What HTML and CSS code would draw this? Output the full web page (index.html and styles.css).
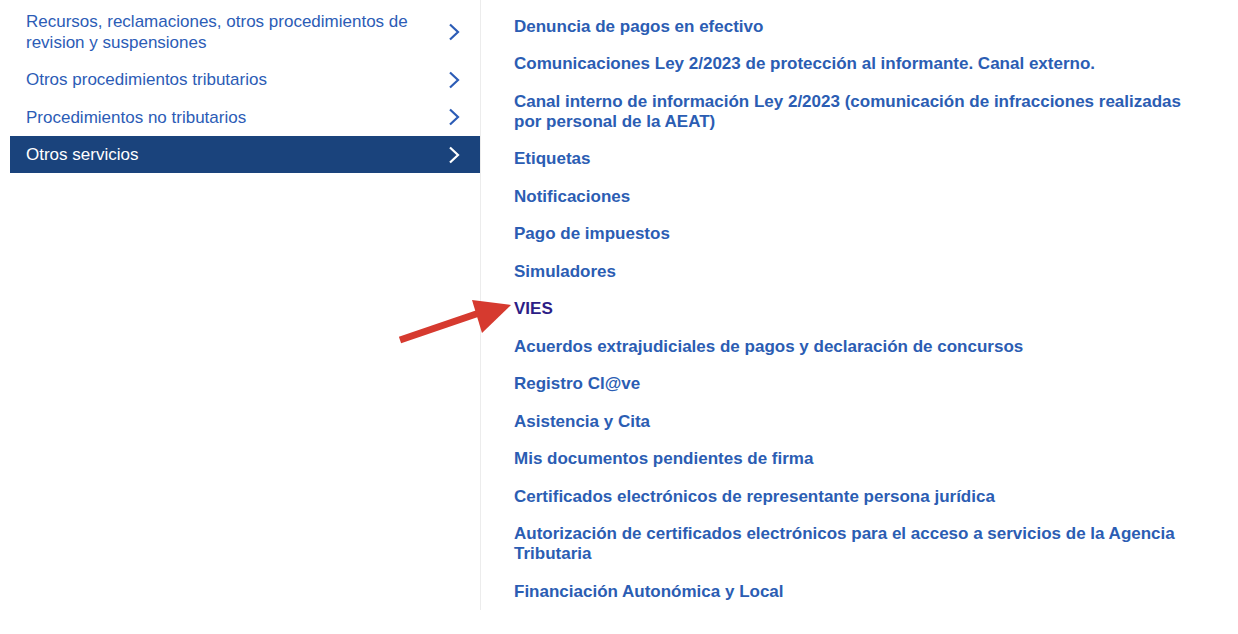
FILE: index.html
```html
<!DOCTYPE html>
<html lang="es">
<head>
    <meta charset="UTF-8">
    <meta name="viewport" content="width=device-width, initial-scale=1.0">
    <title>Otros servicios - Agencia Tributaria</title>
    <link rel="stylesheet" href="styles.css">
</head>
<body>

<div class="page">
    <ul class="side-nav">
        <li class="side-item">
            <a href="#">Recursos, reclamaciones, otros procedimientos de revision y suspensiones</a>
            <svg class="chev" viewBox="0 0 12 18"><polyline points="2,1.5 10,9 2,16.5"/></svg>
        </li>
        <li class="side-item">
            <a href="#">Otros procedimientos tributarios</a>
            <svg class="chev" viewBox="0 0 12 18"><polyline points="2,1.5 10,9 2,16.5"/></svg>
        </li>
        <li class="side-item">
            <a href="#">Procedimientos no tributarios</a>
            <svg class="chev" viewBox="0 0 12 18"><polyline points="2,1.5 10,9 2,16.5"/></svg>
        </li>
        <li class="side-item active">
            <a href="#">Otros servicios</a>
            <svg class="chev" viewBox="0 0 12 18"><polyline points="2,1.5 10,9 2,16.5"/></svg>
        </li>
    </ul>

    <ul class="links">
        <li><a href="#">Denuncia de pagos en efectivo</a></li>
        <li><a href="#">Comunicaciones Ley 2/2023 de protección al informante. Canal externo.</a></li>
        <li><a href="#">Canal interno de información Ley 2/2023 (comunicación de infracciones realizadas por personal de la AEAT)</a></li>
        <li><a href="#">Etiquetas</a></li>
        <li><a href="#">Notificaciones</a></li>
        <li><a href="#">Pago de impuestos</a></li>
        <li><a href="#">Simuladores</a></li>
        <li><a href="#" class="visited">VIES</a></li>
        <li><a href="#">Acuerdos extrajudiciales de pagos y declaración de concursos</a></li>
        <li><a href="#">Registro Cl@ve</a></li>
        <li><a href="#">Asistencia y Cita</a></li>
        <li><a href="#">Mis documentos pendientes de firma</a></li>
        <li><a href="#">Certificados electrónicos de representante persona jurídica</a></li>
        <li><a href="#">Autorización de certificados electrónicos para el acceso a servicios de la Agencia Tributaria</a></li>
        <li><a href="#">Financiación Autonómica y Local</a></li>
    </ul>

    <!-- flecha roja señalando VIES -->
    <svg class="pointer" viewBox="0 0 120 50">
        <line x1="4" y1="45" x2="86" y2="17" stroke="#d63a2f" stroke-width="7"/>
        <polygon points="76,5 115,10 86,38" fill="#d63a2f"/>
    </svg>
</div>

</body>
</html>
```

FILE: styles.css
```css
body {
    margin: 0;
    background: #fff;
    font-family: 'Liberation Sans', Arial, sans-serif;
}
.page {
    position: relative;
    display: flex;
    align-items: flex-start;
}
ul {
    list-style: none;
    margin: 0;
    padding: 0;
}
a {
    text-decoration: none;
}
.side-nav {
    width: 470px;
    margin-left: 10px;
    padding-top: 2px;
    height: 608px;
    border-right: 1px solid #ececec;
}
.side-item {
    display: flex;
    align-items: center;
    justify-content: space-between;
    padding: 8.75px 20px 7.75px 16px;
}
.side-item a {
    font-size: 17px;
    line-height: 21px;
    color: #2c5cb6;
    max-width: 405px;
}
.chev {
    width: 12px;
    height: 18px;
    flex-shrink: 0;
    fill: none;
    stroke: #2c5cb6;
    stroke-width: 2.2;
}
.side-item.active {
    background: #1a437c;
}
.side-item.active a {
    color: #fff;
}
.side-item.active .chev {
    stroke: #fff;
}
.links {
    flex: 1;
    padding: 8px 50px 0 33px;
}
.links li {
    padding: 8.75px 0;
}
.links a {
    font-size: 17px;
    line-height: 20px;
    font-weight: bold;
    color: #2b5db3;
}
.links a.visited {
    color: #2c1d86;
}
.pointer {
    position: absolute;
    left: 396px;
    top: 295px;
    width: 120px;
    height: 50px;
}
```
